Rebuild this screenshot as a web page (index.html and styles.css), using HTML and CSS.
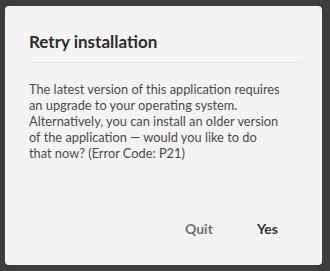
FILE: index.html
```html
<!DOCTYPE html>
<html>
<head>
<meta charset="utf-8">
<link rel="stylesheet" href="styles.css">
</head>
<body>
<div class="dialog">
  <h1 class="title">Retry installation</h1>
  <hr class="divider">
  <p class="message">The latest version of this application requires<br>an upgrade to your operating system.<br>Alternatively, you can install an older version<br>of the application — would you like to do<br>that now? (Error Code: P21)</p>
  <div class="actions">
    <button class="btn btn-quit">Quit</button>
    <button class="btn btn-yes">Yes</button>
  </div>
</div>
</body>
</html>
```
FILE: styles.css
```css
html, body {
  margin: 0;
  padding: 0;
  background: #3d3d3d;
  width: 330px;
  height: 271px;
  overflow: hidden;
}
body {
  padding: 6px 8px 6px 5px;
  box-sizing: border-box;
  font-family: Lato, "Open Sans", sans-serif;
}
.dialog {
  background: #f4f4f4;
  border-radius: 4px;
  height: 259px;
  box-sizing: border-box;
  padding: 26px 21px 0 24px;
  display: flex;
  flex-direction: column;
}
.title {
  margin: 0;
  font-size: 17px;
  font-weight: 700;
  color: #2c2c2c;
  line-height: 20px;
}
.divider {
  border: 0;
  border-top: 1px solid #e3e3e3;
  margin: 10px 0 0 0;
}
.message {
  margin: 18px -10px 0 0;
  font-size: 12.8px;
  line-height: 16px;
  color: #4b4b4b;
  white-space: nowrap;
}
.actions {
  margin-top: auto;
  margin-bottom: 27px;
  display: flex;
  justify-content: flex-end;
  gap: 44px;
  padding-right: 23px;
}
.btn {
  background: none;
  border: 0;
  padding: 0;
  font-family: inherit;
  font-size: 14px;
  font-weight: 700;
  line-height: 18px;
}
.btn-quit { color: #707070; }
.btn-yes { color: #323232; }
```
